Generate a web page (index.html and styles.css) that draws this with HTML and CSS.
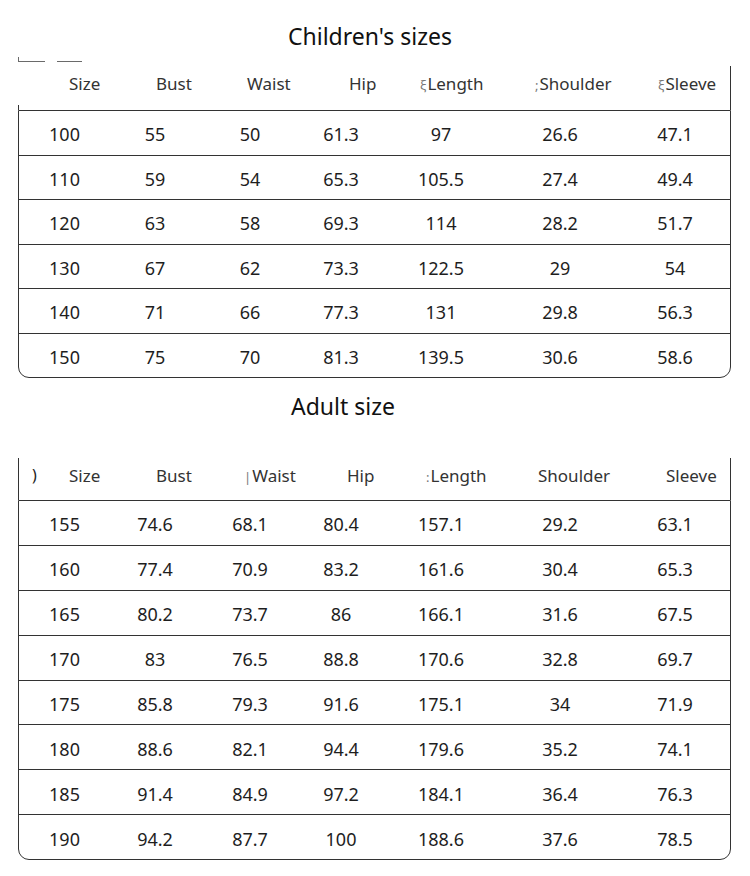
FILE: index.html
```html
<!DOCTYPE html>
<html lang="en">
<head>
<meta charset="utf-8">
<title>Size chart</title>
<link rel="stylesheet" href="styles.css">
</head>
<body>
<main class="page">
  <section class="chart chart-kids">
    <h2 class="title title-kids">Children's sizes</h2>
    <div class="table">
      <span class="mark mark-a"></span>
      <span class="mark mark-b"></span>
      <span class="mark mark-c"></span>
      <div class="head head-kids">
        <span>Size</span><span>Bust</span><span>Waist</span><span>Hip</span><span><i class="glitch">ξ</i>Length</span><span><i class="glitch">;</i>Shoulder</span><span><i class="glitch">ξ</i>Sleeve</span>
      </div>
      <div class="body body-kids">
        <div class="row"><span>100</span><span>55</span><span>50</span><span>61.3</span><span>97</span><span>26.6</span><span>47.1</span></div>
        <div class="row"><span>110</span><span>59</span><span>54</span><span>65.3</span><span>105.5</span><span>27.4</span><span>49.4</span></div>
        <div class="row"><span>120</span><span>63</span><span>58</span><span>69.3</span><span>114</span><span>28.2</span><span>51.7</span></div>
        <div class="row"><span>130</span><span>67</span><span>62</span><span>73.3</span><span>122.5</span><span>29</span><span>54</span></div>
        <div class="row"><span>140</span><span>71</span><span>66</span><span>77.3</span><span>131</span><span>29.8</span><span>56.3</span></div>
        <div class="row"><span>150</span><span>75</span><span>70</span><span>81.3</span><span>139.5</span><span>30.6</span><span>58.6</span></div>
      </div>
    </div>
  </section>

  <section class="chart chart-adult">
    <h2 class="title title-adult">Adult size</h2>
    <div class="table">
      <div class="head head-adult">
        <span><i class="glitch lead">)</i>Size</span><span>Bust</span><span><i class="glitch">|</i>Waist</span><span>Hip</span><span><i class="glitch">:</i>Length</span><span>Shoulder</span><span>Sleeve</span>
      </div>
      <div class="body body-adult">
        <div class="row"><span>155</span><span>74.6</span><span>68.1</span><span>80.4</span><span>157.1</span><span>29.2</span><span>63.1</span></div>
        <div class="row"><span>160</span><span>77.4</span><span>70.9</span><span>83.2</span><span>161.6</span><span>30.4</span><span>65.3</span></div>
        <div class="row"><span>165</span><span>80.2</span><span>73.7</span><span>86</span><span>166.1</span><span>31.6</span><span>67.5</span></div>
        <div class="row"><span>170</span><span>83</span><span>76.5</span><span>88.8</span><span>170.6</span><span>32.8</span><span>69.7</span></div>
        <div class="row"><span>175</span><span>85.8</span><span>79.3</span><span>91.6</span><span>175.1</span><span>34</span><span>71.9</span></div>
        <div class="row"><span>180</span><span>88.6</span><span>82.1</span><span>94.4</span><span>179.6</span><span>35.2</span><span>74.1</span></div>
        <div class="row"><span>185</span><span>91.4</span><span>84.9</span><span>97.2</span><span>184.1</span><span>36.4</span><span>76.3</span></div>
        <div class="row"><span>190</span><span>94.2</span><span>87.7</span><span>100</span><span>188.6</span><span>37.6</span><span>78.5</span></div>
      </div>
    </div>
  </section>
</main>
</body>
</html>
```

FILE: styles.css
```css
html, body {
  margin: 0;
  padding: 0;
  background: #ffffff;
}

body {
  font-family: "Noto Sans", "Open Sans", "DejaVu Sans", sans-serif;
  color: #222222;
  width: 750px;
  height: 876px;
  overflow: hidden;
}

.page {
  display: flex;
  flex-direction: column;
}

.title {
  margin: 0;
  font-weight: 400;
  font-size: 23px;
  line-height: 30px;
  color: #111111;
}

.title-kids {
  margin-top: 21px;
  padding-left: 288px;
}

.title-adult {
  margin-top: 13px;
  padding-left: 291px;
}

.table {
  position: relative;
  margin-left: 18px;
  width: 713px;
}

.chart-kids .table {
  margin-top: 15px;
}

.chart-adult .table {
  margin-top: 37px;
}

/* small stray marks above the children's table */
.mark {
  position: absolute;
  background: #6a6a6a;
}

.mark-a {
  left: 0;
  top: -5px;
  width: 27px;
  height: 1px;
}

.mark-b {
  left: 39px;
  top: -5px;
  width: 25px;
  height: 1px;
}

.mark-c {
  left: 0;
  top: -9px;
  width: 1px;
  height: 5px;
}

.head {
  position: relative;
  display: grid;
  align-items: center;
  font-size: 17px;
  color: #333333;
  padding-left: 51px;
  box-sizing: border-box;
}

.head span {
  white-space: nowrap;
}

.head-kids {
  height: 44px;
  padding-bottom: 9px;
  grid-template-columns: 87px 91px 102px 71px 115px 123px 1fr;
}

.head-adult {
  height: 42px;
  padding-bottom: 8px;
  grid-template-columns: 87px 88px 103px 79px 112px 128px 1fr;
}

.head::before,
.head::after {
  content: "";
  position: absolute;
  bottom: 0;
  width: 1px;
  background: #333333;
}

.head-kids::before {
  left: 0;
  height: 5px;
}

.head-kids::after {
  right: 0;
  height: 44px;
}

.head-adult::before {
  left: 0;
  height: 42px;
}

.head-adult::after {
  right: 0;
  height: 42px;
}

.glitch {
  font-style: normal;
  color: #777777;
  font-size: 13px;
  margin-right: 1px;
}

.glitch.lead {
  position: absolute;
  left: 14px;
  font-size: 16px;
  color: #222222;
}

.body {
  border: 1px solid #333333;
  border-radius: 0 0 11px 11px;
}

.row {
  display: grid;
  grid-template-columns: 91px 90px 100px 82px 118px 120px 1fr;
  align-items: center;
  box-sizing: content-box;
  padding-top: 3px;
  font-size: 18px;
  color: #1e1e1e;
  text-align: center;
}

.row + .row {
  border-top: 1px solid #333333;
}

.body-kids .row {
  height: 40.5px;
}

.body-adult .row {
  height: 40.9px;
}
```
